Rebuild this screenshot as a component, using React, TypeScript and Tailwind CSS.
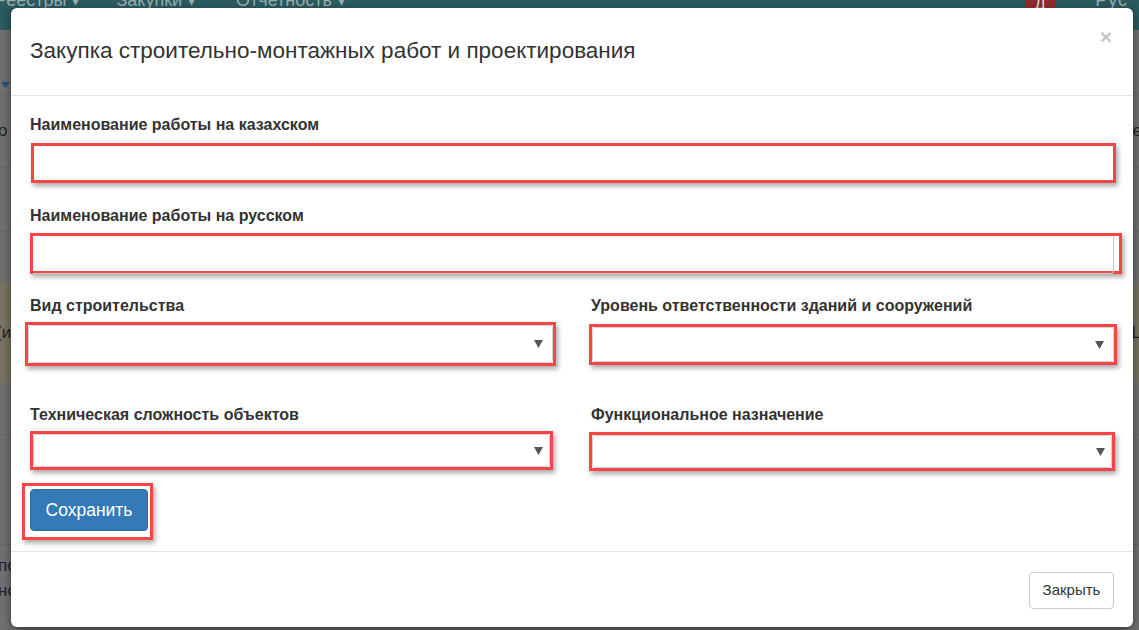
import React from "react";

function Arrow() {
  return (
    <svg width="9" height="8" viewBox="0 0 9 8" className="shrink-0">
      <path d="M0 0 L9 0 L4.5 8 Z" fill="#555" />
    </svg>
  );
}

function SelectBox({ className, arrowMr }: { className: string; arrowMr: string }) {
  return (
    <div
      className={
        "border-[3px] border-[#f54545] shadow-[2px_3px_5px_rgba(0,0,0,0.35)] bg-white " + className
      }
    >
      <div className={"h-full border border-[#d2d2d2] rounded-[3px] flex items-center justify-end " + arrowMr}>
        <Arrow />
      </div>
    </div>
  );
}

export default function App() {
  return (
    <div className="relative w-[1139px] h-[630px] overflow-hidden bg-[#707070] font-['Liberation_Sans',Arial,sans-serif]">
      {/* background page (dimmed) */}
      <div className="flex flex-col">
        <nav className="h-[30px] bg-[#2a5a5e] flex items-start text-[#98adaf] text-[18px] overflow-hidden">
          <span className="-mt-[10px] leading-[20px] ml-[-5px]">Реестры ▾</span>
          <span className="-mt-[10px] leading-[20px] ml-[36px]">Закупки ▾</span>
          <span className="-mt-[10px] leading-[20px] ml-[40px]">Отчетность ▾</span>
          <span className="ml-auto w-[30px] h-[10px] bg-[#8e2c2c] text-[#e8d8d8] text-[16px] leading-[8px] text-center overflow-hidden">Д</span>
          <span className="-mt-[10px] leading-[20px] ml-[40px] mr-[11px] tracking-[1px]">Рус</span>
        </nav>
        <div className="h-[65px] border-b border-[#676767] flex items-end pb-[6px] pl-[1px]">
          <svg width="9" height="6" viewBox="0 0 9 6"><path d="M0 0 L9 0 L4.5 6 Z" fill="#21507d" /></svg>
        </div>
        <div className="h-[73px] border-b border-[#676767] flex items-center justify-between text-[17px] text-[#222] px-0">
          <span className="-ml-[2px]">о</span>
          <span className="-mr-[3px]">е</span>
        </div>
        <div className="h-[64px] border-b border-[#676767]" />
        <div className="h-[51px]" />
        <div className="h-[100px] bg-[#787362] flex items-center justify-between text-[17px] text-[#222]">
          <span className="-ml-[4px]">(и</span>
          <span className="-mr-[2px]">L</span>
        </div>
        <div className="h-[52px] border-b border-[#676767]" />
        <div className="h-[110px] border-b border-[#676767]" />
        <div className="flex flex-col text-[17px] text-[#222] leading-[25px] pt-[8px]">
          <span className="-ml-[2px]">по</span>
          <span className="-ml-[2px]">но</span>
        </div>
      </div>

      {/* modal */}
      <div className="absolute left-[11px] top-[8px] w-[1122px] h-[619px] bg-white rounded-[6px] shadow-[0_3px_9px_rgba(0,0,0,0.5)] flex flex-col text-[#333]">
        {/* header */}
        <div className="h-[88px] border-b border-[#e5e5e5] px-[19px] pt-[20px] flex items-start justify-between">
          <h4 className="mt-[8px] text-[22.5px] leading-[30px] font-normal text-[#333]">
            Закупка строительно-монтажных работ и проектирования
          </h4>
          <span className="-mt-[2px] mr-[2px] text-[21px] leading-[21px] font-bold text-[#c6c6c6]">×</span>
        </div>

        {/* body */}
        <div className="h-[455px] px-[19px] pt-[19px] flex flex-col">
          <label className="text-[16px] font-bold leading-[20px]">Наименование работы на казахском</label>
          <div className="mt-[8px] ml-[1px] mr-[-2px] h-[40px] border-[3px] border-[#f54545] bg-white shadow-[2px_3px_5px_rgba(0,0,0,0.35)]" />

          <label className="mt-[23px] text-[16px] font-bold leading-[20px]">Наименование работы на русском</label>
          <div className="mt-[7px] mr-[-8px] h-[41px] border-[3px] border-[#f54545] bg-white shadow-[2px_3px_5px_rgba(0,0,0,0.35)]">
            <div className="h-[38px] mr-[5px] border-r border-b border-[#c8c8c8] rounded-br-[4px]" />
          </div>

          <div className="mt-[22px] grid grid-cols-[527px_525px] gap-x-[32px] gap-y-[39px]">
            <div className="flex flex-col">
              <label className="text-[16px] font-bold leading-[20px]">Вид строительства</label>
              <SelectBox className="mt-[6px] ml-[-5px] mr-[1px] h-[44px]" arrowMr="pr-[9px]" />
            </div>
            <div className="flex flex-col">
              <label className="ml-[2px] text-[16px] font-bold leading-[20px]">Уровень ответственности зданий и сооружений</label>
              <SelectBox className="mt-[8px] mr-[-3px] h-[41px]" arrowMr="pr-[9px]" />
            </div>
            <div className="flex flex-col">
              <label className="text-[16px] font-bold leading-[20px]">Техническая сложность объектов</label>
              <SelectBox className="mt-[6px] mr-[4px] h-[39px]" arrowMr="pr-[6px]" />
            </div>
            <div className="flex flex-col">
              <label className="ml-[2px] text-[16px] font-bold leading-[20px]">Функциональное назначение</label>
              <SelectBox className="mt-[7px] mr-[-1px] h-[39px]" arrowMr="pr-[6px]" />
            </div>
          </div>

          <div className="mt-[12px] ml-[-8px] w-[131px] h-[57px] border-[3px] border-[#f54545] shadow-[2px_3px_5px_rgba(0,0,0,0.35)] pl-[5px] pt-[3px]">
            <button className="w-[118px] h-[42px] bg-[#337ab7] border border-[#2e6da4] rounded-[4px] text-white text-[17.5px] leading-[20px]">
              Сохранить
            </button>
          </div>
        </div>

        {/* footer */}
        <div className="h-[76px] border-t border-[#e5e5e5] px-[19px] flex items-center justify-end">
          <button className="w-[85px] h-[37px] bg-white border border-[#cccccc] rounded-[4px] text-[15px] text-[#333] mb-[-1px]">
            Закрыть
          </button>
        </div>
      </div>
    </div>
  );
}
